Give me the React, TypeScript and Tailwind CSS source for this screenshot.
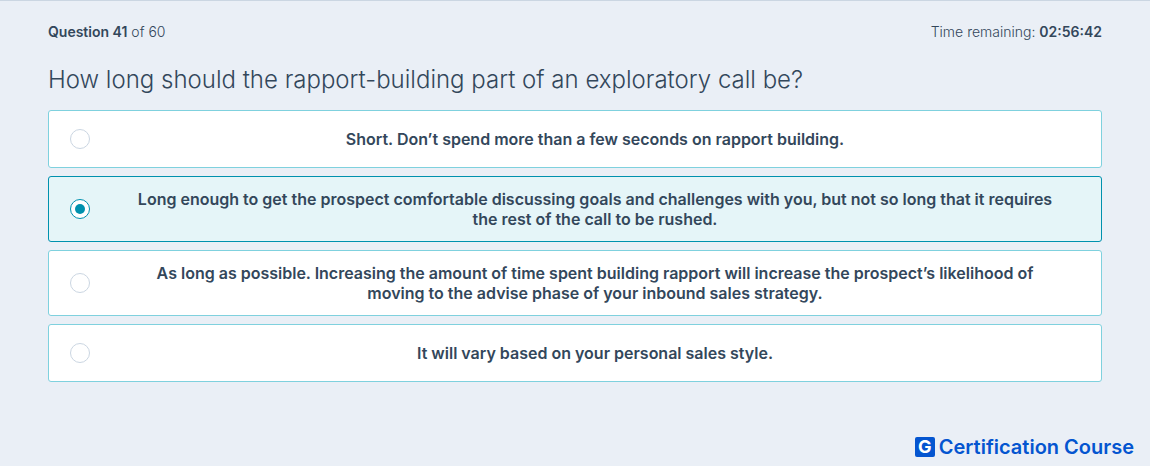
import { useState } from "react";
import { clsx } from "clsx";

interface Answer {
  id: string;
  text: string;
}

const ANSWERS: Answer[] = [
  { id: "short", text: "Short. Don’t spend more than a few seconds on rapport building." },
  {
    id: "long-enough",
    text: "Long enough to get the prospect comfortable discussing goals and challenges with you, but not so long that it requires the rest of the call to be rushed.",
  },
  {
    id: "as-long-as-possible",
    text: "As long as possible. Increasing the amount of time spent building rapport will increase the prospect’s likelihood of moving to the advise phase of your inbound sales strategy.",
  },
  { id: "varies", text: "It will vary based on your personal sales style." },
];

interface AnswerOptionProps {
  answer: Answer;
  checked: boolean;
  onSelect: (id: string) => void;
}

function AnswerOption({ answer, checked, onSelect }: AnswerOptionProps) {
  return (
    <label
      className={clsx(
        "flex min-h-[58px] cursor-pointer items-center gap-5 rounded-[3px] border px-[21px] py-3",
        checked ? "border-[#0091ae] bg-[#e5f5f8]" : "border-[#7fd1de] bg-white"
      )}
    >
      <input
        type="radio"
        name="answer"
        value={answer.id}
        checked={checked}
        onChange={() => onSelect(answer.id)}
        className="grid size-5 shrink-0 appearance-none place-items-center rounded-full border border-[#cbd6e2] bg-white before:size-[10px] before:rounded-full checked:border-[#0091ae] checked:before:bg-[#0091ae]"
      />
      <span className="flex-1 px-5 text-center text-base leading-5 font-semibold">{answer.text}</span>
    </label>
  );
}

export default function App() {
  const [selected, setSelected] = useState("long-enough");

  return (
    <div className="flex min-h-screen flex-col border-t border-[#cbd6e2] bg-[#eaeff6] font-['Inter',sans-serif] text-[#33475b]">
      <main className="px-12 pt-[21px]">
        <header className="flex items-center justify-between text-sm leading-5 font-light">
          <p>
            <strong className="font-semibold">Question 41</strong> of 60
          </p>
          <p>
            Time remaining: <strong className="font-semibold">02:56:42</strong>
          </p>
        </header>

        <form>
          <fieldset>
            <legend className="pt-5 pb-3 text-2xl leading-9 font-light">
              How long should the rapport-building part of an exploratory call be?
            </legend>
            <div className="flex flex-col gap-2">
              {ANSWERS.map((answer) => (
                <AnswerOption
                  key={answer.id}
                  answer={answer}
                  checked={selected === answer.id}
                  onSelect={setSelected}
                />
              ))}
            </div>
          </fieldset>
        </form>
      </main>

      <footer className="mt-auto flex items-center justify-end gap-1 pr-4 pb-[7px] text-[#0455d0]">
        <span
          className="flex size-5 items-center justify-center rounded-xs bg-[#0455d0] text-lg leading-5 font-bold text-white"
          aria-hidden
        >
          G
        </span>
        <span className="text-xl leading-6 font-semibold">Certification Course</span>
      </footer>
    </div>
  );
}
